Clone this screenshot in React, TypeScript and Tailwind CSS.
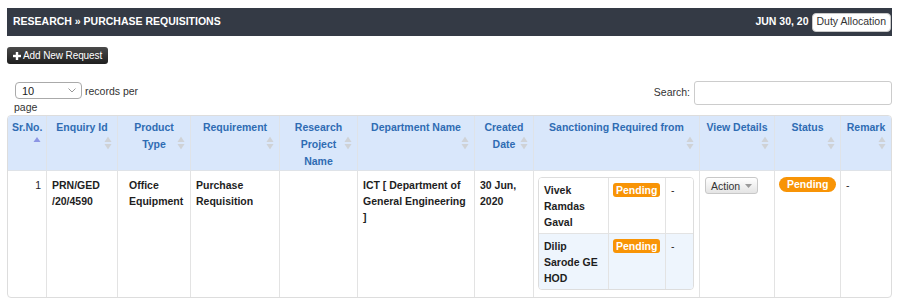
import React from 'react';

const colWidths = [38, 71, 73, 89, 78, 117, 59, 166, 75, 66, 51];

const SortIcon: React.FC<{ asc?: boolean }> = ({ asc }) => (
  <svg
    width="8"
    height="13"
    viewBox="0 0 8 13"
    className="absolute right-[5px] top-1/2 -translate-y-1/2"
  >
    {asc ? (
      <path d="M4 0.5 L7.5 5.5 L0.5 5.5 Z" fill="#8c95e4" />
    ) : (
      <>
        <path d="M4 0 L7.5 5.5 L0.5 5.5 Z" fill="#cfd2d6" />
        <path d="M0.5 7.5 L7.5 7.5 L4 13 Z" fill="#cfd2d6" />
      </>
    )}
  </svg>
);

const headers: { label: React.ReactNode; asc?: boolean }[] = [
  { label: 'Sr.No.', asc: true },
  { label: 'Enquiry Id' },
  { label: <>Product<br />Type</> },
  { label: 'Requirement' },
  { label: <>Research<br />Project<br />Name</> },
  { label: 'Department Name' },
  { label: <>Created<br />Date</> },
  { label: 'Sanctioning Required from' },
  { label: 'View Details' },
  { label: 'Status' },
  { label: 'Remark' },
];

const Pending: React.FC = () => (
  <span className="mt-[1px] block w-fit rounded-[3px] bg-[#f89406] px-[3px] text-[10.5px] font-bold leading-[14px] text-white">
    Pending
  </span>
);

const sanctions = [
  { name: <>Vivek<br />Ramdas<br />Gaval</>, bg: 'bg-white' },
  { name: <>Dilip<br />Sarode GE<br />HOD</>, bg: 'bg-[#eef5fd]' },
];

export default function App() {
  return (
    <div className="min-h-[304px] bg-white pl-[7px] pr-[8px] pt-[8px] font-['Liberation_Sans',Arial,sans-serif] text-[10.5px] text-[#333]">
      {/* title bar */}
      <div className="flex h-[28px] items-center justify-between bg-[#343a45] pl-[6px] pr-px">
        <span className="text-[10.5px] font-bold text-white">RESEARCH » PURCHASE REQUISITIONS</span>
        <div className="flex items-center">
          <span className="text-[10.5px] font-bold text-white">JUN 30, 20</span>
          <button className="ml-[3px] h-[19px] rounded-[4px] border border-[#c9c9c9] bg-white px-[4px] text-[10.5px] text-[#333]">
            Duty Allocation
          </button>
        </div>
      </div>

      <button className="mt-[11px] flex h-[17px] items-center gap-[2px] rounded-[3px] bg-linear-to-b from-[#4a4a4a] to-[#1f1f1f] px-[6px] text-[10px] tracking-[-0.1px] text-white">
        <svg width="8" height="8" viewBox="0 0 8 8">
          <rect x="2.8" y="0" width="2.4" height="8" fill="#fff" />
          <rect x="0" y="2.8" width="8" height="2.4" fill="#fff" />
        </svg>
        Add New Request
      </button>

      {/* length + search */}
      <div className="mt-[17px] flex items-start justify-between">
        <div className="ml-[7px] mt-[1px] leading-[16px]">
          <div className="flex items-center">
            <div className="ml-px flex h-[17px] w-[67px] items-center justify-between rounded-[4px] border border-[#aaa] bg-white pl-[6px] pr-[5px] text-[11px] text-[#222]">
              <span>10</span>
              <svg width="8" height="5" viewBox="0 0 8 5">
                <path d="M0.5 0.5 L4 4 L7.5 0.5" fill="none" stroke="#999" strokeWidth="1" />
              </svg>
            </div>
            <span className="ml-[3px]">records per</span>
          </div>
          <div>page</div>
        </div>
        <div className="flex items-center">
          <span className="mr-[4px]">Search:</span>
          <div className="h-[24px] w-[198px] rounded-[3px] border border-[#ccc] bg-white" />
        </div>
      </div>

      {/* table */}
      <div className="overflow-hidden rounded-[4px] border border-[#ddd]">
        <table className="w-[883px] table-fixed border-separate border-spacing-0">
          <colgroup>
            {colWidths.map((w, i) => (
              <col key={i} style={{ width: w }} />
            ))}
          </colgroup>
          <thead>
            <tr className="bg-[#d9e7fb]">
              {headers.map((h, i) => (
                <th
                  key={i}
                  className={`relative border-b border-[#dfe3e8] px-[4px] pb-0 pt-[3px] text-center align-top text-[10.5px] font-bold leading-[17px] text-[#2f6cb3] ${
                    i === 0 ? '' : 'border-l'
                  }`}
                >
                  <span className="whitespace-nowrap">{h.label}</span>
                  <SortIcon asc={h.asc} />
                </th>
              ))}
            </tr>
          </thead>
          <tbody className="text-[10.5px] font-bold leading-[16px] text-[#1e1e1e]">
            <tr>
              <td className="px-[5px] pb-[7px] pt-[6px] text-right align-top font-normal">1</td>
              <td className="border-l border-[#e3e3e3] px-[5px] pt-[6px] align-top">
                PRN/GED
                <br />
                /20/4590
              </td>
              <td className="border-l border-[#e3e3e3] pl-[11px] pr-[5px] pt-[6px] align-top">Office Equipment</td>
              <td className="border-l border-[#e3e3e3] px-[5px] pt-[6px] align-top">Purchase Requisition</td>
              <td className="border-l border-[#e3e3e3] px-[5px] pt-[6px] align-top"></td>
              <td className="border-l border-[#e3e3e3] px-[5px] pt-[6px] align-top">
                ICT [ Department of General Engineering ]
              </td>
              <td className="border-l border-[#e3e3e3] px-[5px] pt-[6px] align-top">30 Jun, 2020</td>
              <td className="border-l border-[#e3e3e3] px-[4px] pb-[7px] pt-[6px] align-top">
                <table className="w-[156px] table-fixed border-separate border-spacing-0 overflow-hidden rounded-[4px] border border-[#ddd]">
                  <colgroup>
                    <col style={{ width: 69 }} />
                    <col style={{ width: 57 }} />
                    <col style={{ width: 28 }} />
                  </colgroup>
                  <tbody>
                    {sanctions.map((s, i) => (
                      <tr key={i} className={s.bg}>
                        <td className={`px-[5px] pb-[3px] pt-[4px] align-top ${i ? 'border-t border-[#e3e3e3]' : ''}`}>
                          {s.name}
                        </td>
                        <td className={`border-l border-[#e3e3e3] px-[4px] pb-[3px] pt-[4px] align-top ${i ? 'border-t' : ''}`}>
                          <Pending />
                        </td>
                        <td className={`border-l border-[#e3e3e3] px-[5px] pb-[3px] pt-[4px] align-top font-normal ${i ? 'border-t' : ''}`}>
                          -
                        </td>
                      </tr>
                    ))}
                  </tbody>
                </table>
              </td>
              <td className="border-l border-[#e3e3e3] px-[5px] pt-[6px] align-top">
                <button className="flex h-[17px] items-center gap-[5px] rounded-[3px] border border-[#c8c8c8] bg-linear-to-b from-white to-[#e4e4e4] px-[5px] text-[10.5px] font-normal text-[#333]">
                  Action
                  <svg width="7" height="4" viewBox="0 0 7 4">
                    <path d="M0 0 L7 0 L3.5 4 Z" fill="#9a9a9a" />
                  </svg>
                </button>
              </td>
              <td className="border-l border-[#e3e3e3] px-[4px] pt-[6px] align-top">
                <span className="block w-fit rounded-full bg-[#f89406] px-[8px] text-[10.5px] font-bold leading-[15px] text-white">
                  Pending
                </span>
              </td>
              <td className="border-l border-[#e3e3e3] px-[5px] pt-[6px] align-top font-normal">-</td>
            </tr>
          </tbody>
        </table>
      </div>
    </div>
  );
}
